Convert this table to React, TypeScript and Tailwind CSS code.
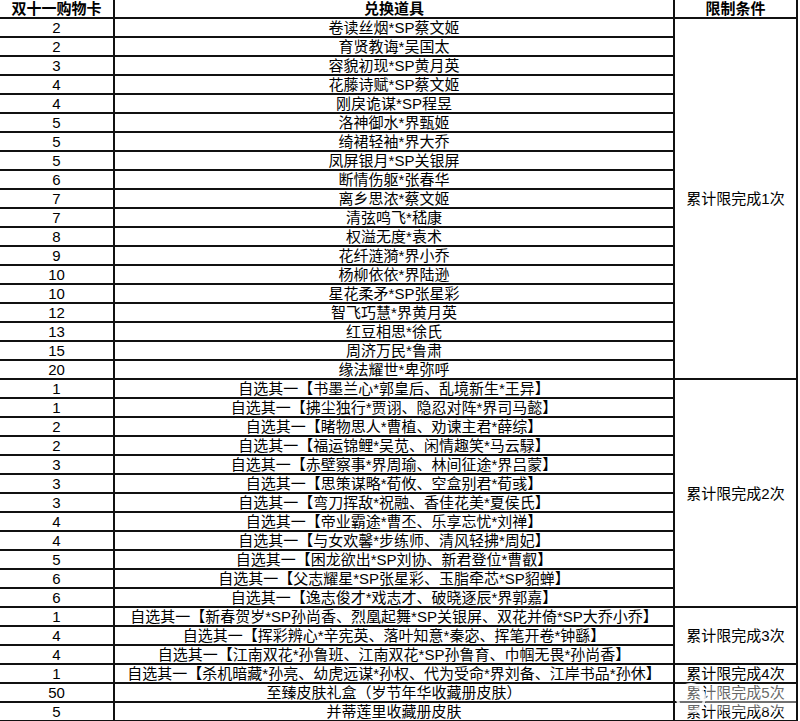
const groups = [
  {
    limit: "累计限完成1次",
    span: "row-span-19",
    rows: [
      ["2", "卷读丝烟*SP蔡文姬"],
      ["2", "育贤教诲*吴国太"],
      ["3", "容貌初现*SP黄月英"],
      ["4", "花藤诗赋*SP蔡文姬"],
      ["4", "刚戾诡谋*SP程昱"],
      ["5", "洛神御水*界甄姬"],
      ["5", "绮裙轻袖*界大乔"],
      ["5", "凤屏银月*SP关银屏"],
      ["6", "断情伤躯*张春华"],
      ["7", "离乡思浓*蔡文姬"],
      ["7", "清弦鸣飞*嵇康"],
      ["8", "权溢无度*袁术"],
      ["9", "花纤涟漪*界小乔"],
      ["10", "杨柳依依*界陆逊"],
      ["10", "星花柔矛*SP张星彩"],
      ["12", "智飞巧慧*界黄月英"],
      ["13", "红豆相思*徐氏"],
      ["15", "周济万民*鲁肃"],
      ["20", "缘法耀世*卑弥呼"],
    ],
  },
  {
    limit: "累计限完成2次",
    span: "row-span-12",
    rows: [
      ["1", "自选其一【书墨兰心*郭皇后、乱境新生*王异】"],
      ["1", "自选其一【拂尘独行*贾诩、隐忍对阵*界司马懿】"],
      ["2", "自选其一【睹物思人*曹植、劝谏主君*薛综】"],
      ["2", "自选其一【福运锦鲤*吴苋、闲情趣笑*马云騄】"],
      ["3", "自选其一【赤壁察事*界周瑜、林间征途*界吕蒙】"],
      ["3", "自选其一【思策谋略*荀攸、空盒别君*荀彧】"],
      ["3", "自选其一【弯刀挥敌*祝融、香佳花美*夏侯氏】"],
      ["4", "自选其一【帝业霸途*曹丕、乐享忘忧*刘禅】"],
      ["4", "自选其一【与女欢馨*步练师、清风轻拂*周妃】"],
      ["5", "自选其一【困龙欲出*SP刘协、新君登位*曹叡】"],
      ["6", "自选其一【父志耀星*SP张星彩、玉脂牵芯*SP貂蝉】"],
      ["6", "自选其一【逸志俊才*戏志才、破晓逐辰*界郭嘉】"],
    ],
  },
  {
    limit: "累计限完成3次",
    span: "row-span-3",
    rows: [
      ["1", "自选其一【新春贺岁*SP孙尚香、烈凰起舞*SP关银屏、双花并倚*SP大乔小乔】"],
      ["4", "自选其一【挥彩辨心*辛宪英、落叶知意*秦宓、挥笔开卷*钟繇】"],
      ["4", "自选其一【江南双花*孙鲁班、江南双花*SP孙鲁育、巾帼无畏*孙尚香】"],
    ],
  },
  {
    limit: "累计限完成4次",
    span: "row-span-1",
    rows: [["1", "自选其一【杀机暗藏*孙亮、幼虎远谋*孙权、代为受命*界刘备、江岸书品*孙休】"]],
  },
  {
    limit: "累计限完成5次",
    span: "row-span-1",
    rows: [["50", "至臻皮肤礼盒（岁节年华收藏册皮肤）"]],
  },
  {
    limit: "累计限完成8次",
    span: "row-span-1",
    rows: [["5", "并蒂莲里收藏册皮肤"]],
  },
];

const cell = "bg-white flex items-center justify-center whitespace-nowrap leading-none";

export default function App() {
  return (
    <div className="relative w-[800px] h-[721px] overflow-hidden bg-white text-[15px] text-black font-['Liberation_Sans','Noto_Sans_CJK_SC',sans-serif]">
      <div className="grid w-[798px] grid-cols-[113px_558px_121px] auto-rows-[17px] gap-[2px] bg-[#111] pr-[2px] pb-[2px]">
        <div className={`${cell} font-bold`}>双十一购物卡</div>
        <div className={`${cell} font-bold`}>兑换道具</div>
        <div className={`${cell} font-bold`}>限制条件</div>
        {groups.map((g) =>
          g.rows.map(([card, item], i) => (
            <>
              <div key={`${item}-a`} className={`${cell} col-start-1`}>
                {card}
              </div>
              <div key={`${item}-b`} className={`${cell} col-start-2`}>
                {item}
              </div>
              {i === 0 && (
                <div key={`${item}-c`} className={`${cell} col-start-3 ${g.span}`}>
                  {g.limit}
                </div>
              )}
            </>
          ))
        )}
      </div>
      {/* watermark in the corner */}
      <div className="absolute left-[676px] top-[683px] h-[30px] w-[30px] rounded-full border-[3px] border-white/80 bg-white/40" />
      <div className="absolute left-[706px] top-[686px] h-[24px] w-[90px] bg-white/40" />
    </div>
  );
}
